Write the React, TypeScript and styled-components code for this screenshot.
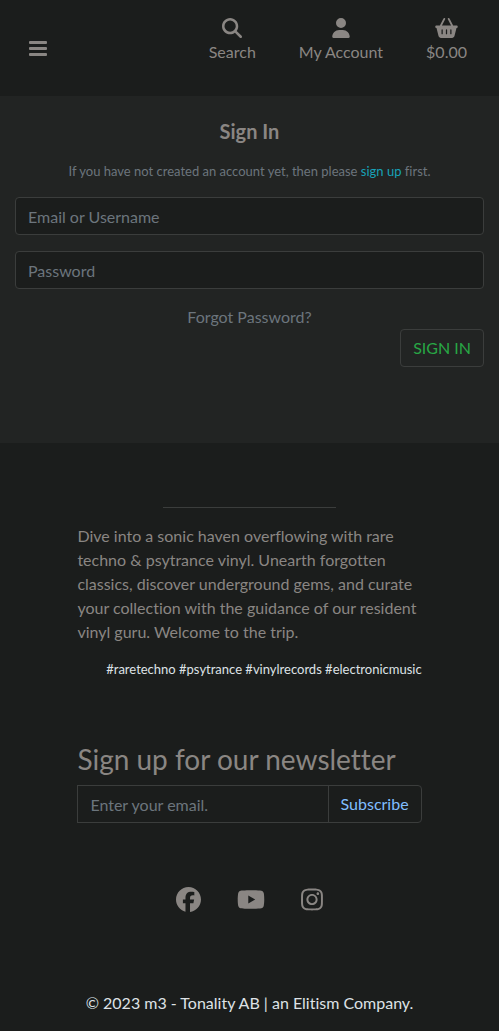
import React from "react";
import styled, { createGlobalStyle } from "styled-components";
import {
  FaBasketShopping,
  FaFacebook,
  FaInstagram,
  FaMagnifyingGlass,
  FaUser,
  FaYoutube,
} from "react-icons/fa6";

const color = {
  page: "#1b1d1c",
  panel: "#222423",
  line: "#3b3d3c",
  text: "#8a8683",
  muted: "#6c757d",
  bright: "#dee2e6",
};

const GlobalStyle = createGlobalStyle`
  *, *::before, *::after { box-sizing: border-box; }
  body {
    margin: 0;
    background: ${color.page};
    color: ${color.text};
    font: 400 16px/24px Lato, "Liberation Sans", sans-serif;
    font-variant-ligatures: none;
  }
  a { color: inherit; text-decoration: none; }
  button, input { font: inherit; }
`;

const Header = styled.header`
  display: flex;
  align-items: center;
  justify-content: space-between;
  height: 96px;
  padding: 0 32px 0 29px;
`;

const MenuButton = styled.button`
  display: flex;
  padding: 0;
  border: 0;
  background: none;
  color: inherit;
`;

const Tools = styled.nav`
  display: flex;
  gap: 43px;
  padding-bottom: 14px;
`;

const Tool = styled.a`
  display: flex;
  flex-direction: column;
  align-items: center;
  gap: 2px;
`;

const Icon = styled.span<{ $width: number; $height: number }>`
  display: flex;

  svg {
    width: ${(p) => p.$width}px;
    height: ${(p) => p.$height}px;
  }
`;

const SignInPanel = styled.main`
  display: flex;
  flex-direction: column;
  padding: 23px 15px 76px;
  background: ${color.panel};
`;

const Title = styled.h1`
  margin: 0 0 17px;
  font-size: 20px;
  line-height: 24px;
  font-weight: 700;
  text-align: center;
`;

const Hint = styled.p`
  margin: 0 0 14px;
  color: ${color.muted};
  font-size: 13px;
  line-height: 23px;
  text-align: center;

  a { color: #17a2b8; }
`;

const Form = styled.form`
  display: flex;
  flex-direction: column;
`;

const Field = styled.input`
  width: 100%;
  height: 38px;
  margin-bottom: 16px;
  padding: 6px 12px;
  border: 1px solid ${color.line};
  border-radius: 4px;
  background: ${color.page};
  color: ${color.text};

  &::placeholder {
    color: ${color.muted};
    opacity: 1;
  }
`;

const ForgotLink = styled.a`
  align-self: center;
  color: ${color.muted};
`;

const OutlineButton = styled.button`
  height: 38px;
  padding: 6px 12px;
  border: 1px solid ${color.line};
  border-radius: 4px;
  background: none;
  color: #28a745;
`;

const SignInButton = styled(OutlineButton)`
  align-self: flex-end;
`;

const Footer = styled.footer`
  width: 75%;
  margin: 0 auto;
  padding: 64px 15px 16px;
`;

const Divider = styled.hr`
  width: 50%;
  margin: 0 auto 16px;
  border: 0;
  border-top: 1px solid ${color.line};
`;

const About = styled.p`
  margin: 0 0 16px;
`;

const Tags = styled.p`
  margin: 0 0 64px;
  color: ${color.bright};
  font-size: 13px;
  line-height: 18px;
  text-align: right;
  white-space: nowrap;
`;

const NewsletterTitle = styled.h2`
  margin: 0 0 9px;
  font-size: 28px;
  line-height: 34px;
  font-weight: 400;
  white-space: nowrap;
`;

const NewsletterForm = styled.form`
  display: flex;
`;

const NewsletterField = styled(Field)`
  flex: 1;
  min-width: 0;
  margin: 0;
  border-radius: 0;
`;

const SubscribeButton = styled(OutlineButton)`
  margin-left: -1px;
  border-radius: 0 4px 4px 0;
  color: #80bdff;
`;

const Social = styled.div`
  display: flex;
  justify-content: center;
  gap: 36px;
  padding: 64px 0 79px;
`;

const Copyright = styled.p`
  margin: 0;
  color: ${color.bright};
  text-align: center;
  white-space: nowrap;
`;

export default function App() {
  return (
    <>
      <GlobalStyle />
      <Header>
        <MenuButton type="button" aria-label="Menu">
          <svg width="18" height="16" viewBox="0 0 18 16" fill="currentColor" aria-hidden="true">
            <rect y="1" width="18" height="3" rx="1" />
            <rect y="7" width="18" height="3" rx="1" />
            <rect y="13" width="18" height="3" rx="1" />
          </svg>
        </MenuButton>
        <Tools>
          <Tool href="#search">
            <Icon $width={20} $height={20}><FaMagnifyingGlass /></Icon>
            Search
          </Tool>
          <Tool href="#account">
            <Icon $width={18} $height={20}><FaUser /></Icon>
            My Account
          </Tool>
          <Tool href="#basket">
            <Icon $width={23} $height={20}><FaBasketShopping /></Icon>
            $0.00
          </Tool>
        </Tools>
      </Header>
      <SignInPanel>
        <Title>Sign In</Title>
        <Hint>
          If you have not created an account yet, then please <a href="#signup">sign up</a> first.
        </Hint>
        <Form onSubmit={(e) => e.preventDefault()}>
          <Field type="text" placeholder="Email or Username" aria-label="Email or Username" />
          <Field type="password" placeholder="Password" aria-label="Password" />
          <ForgotLink href="#forgot">Forgot Password?</ForgotLink>
          <SignInButton type="submit">SIGN IN</SignInButton>
        </Form>
      </SignInPanel>
      <Footer>
        <Divider />
        <About>
          Dive into a sonic haven overflowing with rare techno &amp; psytrance vinyl. Unearth
          forgotten classics, discover underground gems, and curate your collection with the
          guidance of our resident vinyl guru. Welcome to the trip.
        </About>
        <Tags>#raretechno #psytrance #vinylrecords #electronicmusic</Tags>
        <NewsletterTitle>Sign up for our newsletter</NewsletterTitle>
        <NewsletterForm onSubmit={(e) => e.preventDefault()}>
          <NewsletterField type="email" placeholder="Enter your email." aria-label="Email" />
          <SubscribeButton type="submit">Subscribe</SubscribeButton>
        </NewsletterForm>
        <Social>
          <a href="#facebook" aria-label="Facebook">
            <Icon $width={25} $height={25}><FaFacebook /></Icon>
          </a>
          <a href="#youtube" aria-label="YouTube">
            <Icon $width={28} $height={25}><FaYoutube /></Icon>
          </a>
          <a href="#instagram" aria-label="Instagram">
            <Icon $width={22} $height={25}><FaInstagram /></Icon>
          </a>
        </Social>
        <Copyright>© 2023 m3 - Tonality AB | an Elitism Company.</Copyright>
      </Footer>
    </>
  );
}
